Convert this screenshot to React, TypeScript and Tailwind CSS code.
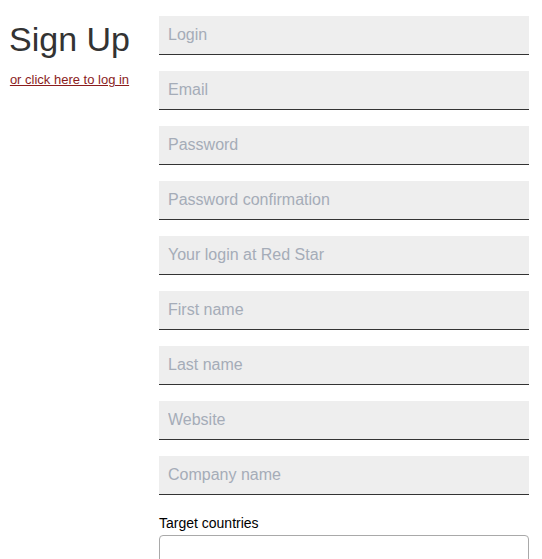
import React from "react";

const fields = [
  "Login",
  "Email",
  "Password",
  "Password confirmation",
  "Your login at Red Star",
  "First name",
  "Last name",
  "Website",
  "Company name",
];

export default function App() {
  return (
    <div className="flex min-h-screen bg-white font-['Liberation_Sans',Arial,sans-serif]">
      {/* heading column */}
      <div className="w-[139px] shrink-0 pt-[19px] text-center">
        <h1 className="text-[34px] leading-[40px] text-[#333333]">Sign Up</h1>
        <a href="#" className="mt-[13px] block text-[13px] leading-[15px] text-[#8b1c1c] underline">
          or click here to log in
        </a>
      </div>

      {/* form */}
      <form className="ml-[20px] flex w-[370px] flex-col pt-4">
        {fields.map((f, i) => (
          <input
            key={f}
            type={f.startsWith("Password") ? "password" : "text"}
            placeholder={f}
            autoFocus={i === 0}
            className="mb-4 h-[39px] w-full border-b border-[#333333] bg-[#eeeeee] pl-[9px] pr-2 text-[16px] text-[#333333] outline-none placeholder:text-[#a5acb8]"
          />
        ))}
        <label className="mt-[4px] mb-[4px] block text-[14px] leading-[16px] text-black">Target countries</label>
        <textarea className="h-[80px] w-full resize-none rounded border border-[#a9a9a9] bg-white outline-none" />
      </form>
    </div>
  );
}
